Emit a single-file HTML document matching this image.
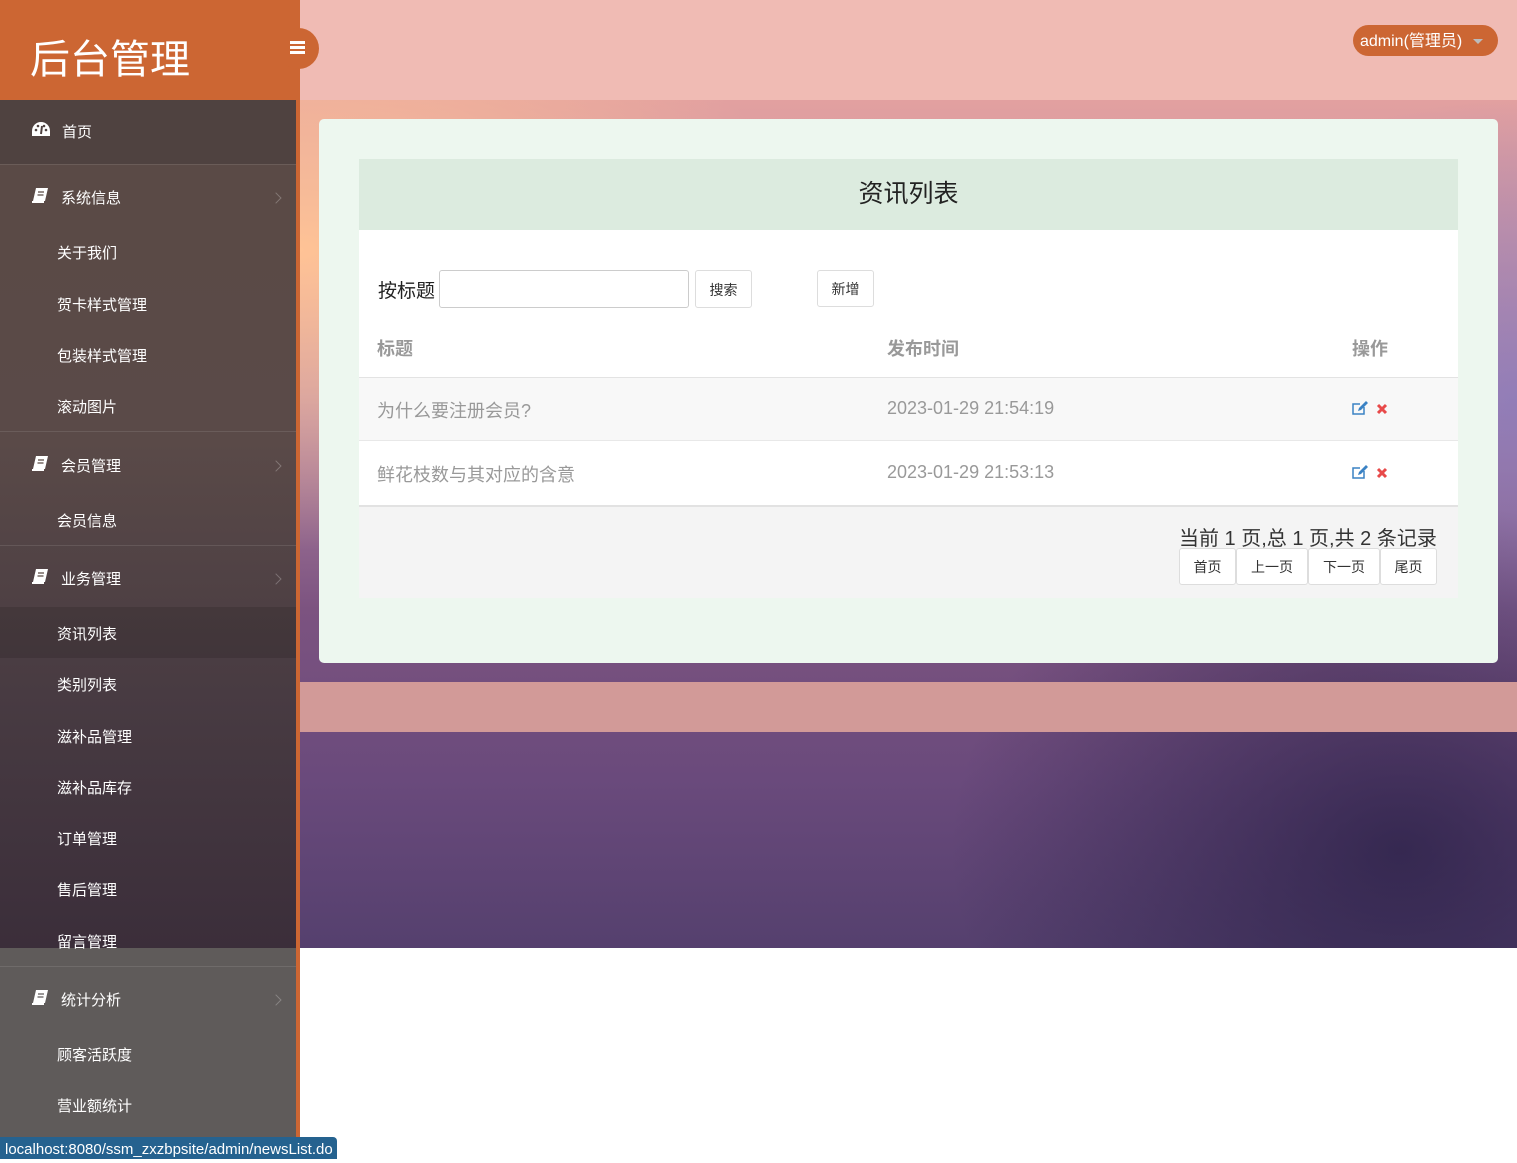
<!DOCTYPE html>
<html><head><meta charset="utf-8"><style>
*{margin:0;padding:0;box-sizing:border-box}
body{width:1517px;height:1159px;position:relative;overflow:hidden;background:#fff;font-family:"Liberation Sans","Noto Sans CJK SC",sans-serif}
.abs{position:absolute}
#logo{left:0;top:0;width:300px;height:100px;background:#cc6633;color:#fff;font-size:40px;padding:27px 0 0 30px}
#tog{left:278px;top:28px;width:41px;height:41px;border-radius:50%;background:#cc6633}
#hdr{left:300px;top:0;width:1217px;height:100px;background:#f0bbb4}
#admin{left:1353px;top:25px;width:145px;height:31px;border-radius:16px;background:#cc6633;color:#fff;font-size:16px;line-height:33px;padding-left:7px}
#bg{left:300px;top:100px;width:1217px;height:848px;background:
radial-gradient(ellipse 450px 350px at 1100px 750px,rgba(35,28,65,.7),transparent),
radial-gradient(ellipse 400px 300px at 1217px 300px,rgba(130,120,190,.7),transparent),
radial-gradient(ellipse 500px 300px at 0px 150px,rgba(255,195,150,1),transparent),
linear-gradient(180deg,#e2a0a0 0%,#b88aa8 35%,#7c5380 60%,#6a4a7c 80%,#55406e 100%)}
#band{left:300px;top:682px;width:1217px;height:50px;background:#d29a98}
#side{left:0;top:100px;width:296px;height:848px;background:linear-gradient(180deg,#5a4a45 0%,#5a4a48 40%,#483b42 70%,#3b2e3a 100%)}
#side2{left:0;top:948px;width:296px;height:211px;background:#5f5b5a}
#oline{left:296px;top:100px;width:4px;height:1059px;background:#cc6633}
.m{position:absolute;left:0;color:#fff;font-size:15px}
.sep{position:absolute;left:0;width:296px;height:1px;background:rgba(255,255,255,.1)}
.arr{position:absolute;left:272px;width:8px;height:8px;border-top:1px solid rgba(255,255,255,.25);border-right:1px solid rgba(255,255,255,.25);transform:rotate(45deg)}
#card{left:319px;top:119px;width:1179px;height:544px;background:#edf7ef;border-radius:5px}
#ph{left:359px;top:159px;width:1099px;height:71px;background:#dcebdf;text-align:center;font-size:25px;line-height:71px;color:#222}
#pb{left:359px;top:230px;width:1099px;height:368px;background:#fff}
.btn{position:absolute;background:#fff;border:1px solid #ddd;border-radius:3px;font-size:14px;color:#333;text-align:center}
.th{position:absolute;top:335px;font-size:18px;font-weight:bold;color:#999}
.td{position:absolute;font-size:18px;color:#999}
</style></head><body>
<div id="hdr" class="abs"></div>
<div id="bg" class="abs"></div>
<div id="band" class="abs"></div>
<div id="logo" class="abs">后台管理</div>
<div id="tog" class="abs"><div style="position:absolute;left:12px;top:13px;width:15px;height:3px;background:#fff;box-shadow:0 5px 0 #fff,0 10px 0 #fff"></div></div>
<div id="admin" class="abs">admin(管理员) <span style="display:inline-block;margin-left:6px;width:0;height:0;border-left:5px solid transparent;border-right:5px solid transparent;border-top:5px solid #bbb;vertical-align:middle"></span></div>
<div id="side" class="abs"></div>
<div id="side2" class="abs"></div>
<div class="abs" style="left:0;top:100px;width:296px;height:64px;background:#4f4240"></div>
<div class="abs" style="left:0;top:607px;width:296px;height:51px;background:rgba(0,0,0,.12)"></div>
<div id="oline" class="abs"></div>

<svg class="abs" style="left:31px;top:121px" width="20" height="16" viewBox="0 0 20 16"><path d="M10 1A9 9 0 0 0 1 10v5h18v-5A9 9 0 0 0 10 1z" fill="#fff"/><circle cx="5" cy="9" r="1.3" fill="#4f4240"/><circle cx="15" cy="9" r="1.3" fill="#4f4240"/><circle cx="7" cy="5" r="1.3" fill="#4f4240"/><circle cx="13" cy="5" r="1.3" fill="#4f4240"/><path d="M10 13L11 5" stroke="#4f4240" stroke-width="2"/></svg>
<div class="m" style="top:121px;left:62px">首页</div>
<div class="sep" style="top:164px"></div>

<svg class="abs" style="left:31px;top:187px" width="18" height="17" viewBox="0 0 18 17"><path d="M5 1h12l-3 13H2z" fill="#fff"/><path d="M1 15h12" stroke="#fff" stroke-width="2"/><path d="M7 5h6M6.5 8h6" stroke="#5a4a45" stroke-width="1.3"/></svg>
<div class="m" style="top:187px;left:61px">系统信息</div><div class="arr" style="top:194px"></div>
<div class="m" style="top:242px;left:57px">关于我们</div>
<div class="m" style="top:294px;left:57px">贺卡样式管理</div>
<div class="m" style="top:345px;left:57px">包装样式管理</div>
<div class="m" style="top:396px;left:57px">滚动图片</div>
<div class="sep" style="top:431px"></div>

<svg class="abs" style="left:31px;top:455px" width="18" height="17" viewBox="0 0 18 17"><path d="M5 1h12l-3 13H2z" fill="#fff"/><path d="M1 15h12" stroke="#fff" stroke-width="2"/><path d="M7 5h6M6.5 8h6" stroke="#5a4a45" stroke-width="1.3"/></svg>
<div class="m" style="top:455px;left:61px">会员管理</div><div class="arr" style="top:462px"></div>
<div class="m" style="top:510px;left:57px">会员信息</div>
<div class="sep" style="top:545px"></div>

<svg class="abs" style="left:31px;top:568px" width="18" height="17" viewBox="0 0 18 17"><path d="M5 1h12l-3 13H2z" fill="#fff"/><path d="M1 15h12" stroke="#fff" stroke-width="2"/><path d="M7 5h6M6.5 8h6" stroke="#5a4a45" stroke-width="1.3"/></svg>
<div class="m" style="top:568px;left:61px">业务管理</div><div class="arr" style="top:575px"></div>
<div class="m" style="top:623px;left:57px">资讯列表</div>
<div class="m" style="top:674px;left:57px">类别列表</div>
<div class="m" style="top:726px;left:57px">滋补品管理</div>
<div class="m" style="top:777px;left:57px">滋补品库存</div>
<div class="m" style="top:828px;left:57px">订单管理</div>
<div class="m" style="top:879px;left:57px">售后管理</div>
<div class="m" style="top:931px;left:57px">留言管理</div>
<div class="sep" style="top:966px"></div>

<svg class="abs" style="left:31px;top:989px" width="18" height="17" viewBox="0 0 18 17"><path d="M5 1h12l-3 13H2z" fill="#fff"/><path d="M1 15h12" stroke="#fff" stroke-width="2"/><path d="M7 5h6M6.5 8h6" stroke="#5f5b5a" stroke-width="1.3"/></svg>
<div class="m" style="top:989px;left:61px">统计分析</div><div class="arr" style="top:996px"></div>
<div class="m" style="top:1044px;left:57px">顾客活跃度</div>
<div class="m" style="top:1095px;left:57px">营业额统计</div>

<div class="abs" style="left:0;top:1137px;width:337px;height:22px;background:#25628f;border-radius:0 4px 0 0;color:#fff;font-size:15px;line-height:26px;padding-left:5px">localhost:8080/ssm_zxzbpsite/admin/newsList.do</div>

<div id="card" class="abs"></div>
<div id="ph" class="abs">资讯列表</div>
<div id="pb" class="abs"></div>
<div class="abs" style="left:378px;top:276px;font-size:19px;color:#222">按标题</div>
<div class="abs" style="left:439px;top:270px;width:250px;height:38px;border:1px solid #ccc;border-radius:3px;background:#fff"></div>
<div class="btn" style="left:695px;top:270px;width:57px;height:38px;line-height:38px">搜索</div>
<div class="btn" style="left:817px;top:270px;width:57px;height:37px;line-height:36px">新增</div>
<div class="th" style="left:377px">标题</div>
<div class="th" style="left:887px">发布时间</div>
<div class="th" style="left:1352px">操作</div>
<div class="abs" style="left:359px;top:377px;width:1099px;height:64px;background:#f8f8f8;border-top:1px solid #e3e3e3;border-bottom:1px solid #e8e8e8"></div>
<div class="td" style="left:377px;top:397px">为什么要注册会员?</div>
<div class="td" style="left:887px;top:398px">2023-01-29 21:54:19</div>
<div class="td" style="left:377px;top:461px">鲜花枝数与其对应的含意</div>
<div class="td" style="left:887px;top:462px">2023-01-29 21:53:13</div>
<svg class="abs" style="left:1352px;top:401px" width="40" height="16" viewBox="0 0 40 16"><path d="M12 6v7H1V3h7" fill="none" stroke="#3a82c4" stroke-width="1.5"/><path d="M6 10l1-3 7-7 2 2-7 7z" fill="#3a82c4"/><path d="M26 4l8 8M34 4l-8 8" stroke="#e84a4a" stroke-width="3"/></svg>
<svg class="abs" style="left:1352px;top:465px" width="40" height="16" viewBox="0 0 40 16"><path d="M12 6v7H1V3h7" fill="none" stroke="#3a82c4" stroke-width="1.5"/><path d="M6 10l1-3 7-7 2 2-7 7z" fill="#3a82c4"/><path d="M26 4l8 8M34 4l-8 8" stroke="#e84a4a" stroke-width="3"/></svg>
<div class="abs" style="left:359px;top:505px;width:1099px;height:93px;background:#f4f4f4;border-top:2px solid #e2e2e2"></div>
<div class="abs" style="left:1179px;top:522px;font-size:20px;color:#333">当前 1 页,总 1 页,共 2 条记录</div>
<div class="btn" style="left:1179px;top:548px;width:57px;height:37px;line-height:37px">首页</div>
<div class="btn" style="left:1236px;top:548px;width:72px;height:37px;line-height:37px">上一页</div>
<div class="btn" style="left:1308px;top:548px;width:72px;height:37px;line-height:37px">下一页</div>
<div class="btn" style="left:1380px;top:548px;width:57px;height:37px;line-height:37px">尾页</div>
</body></html>
